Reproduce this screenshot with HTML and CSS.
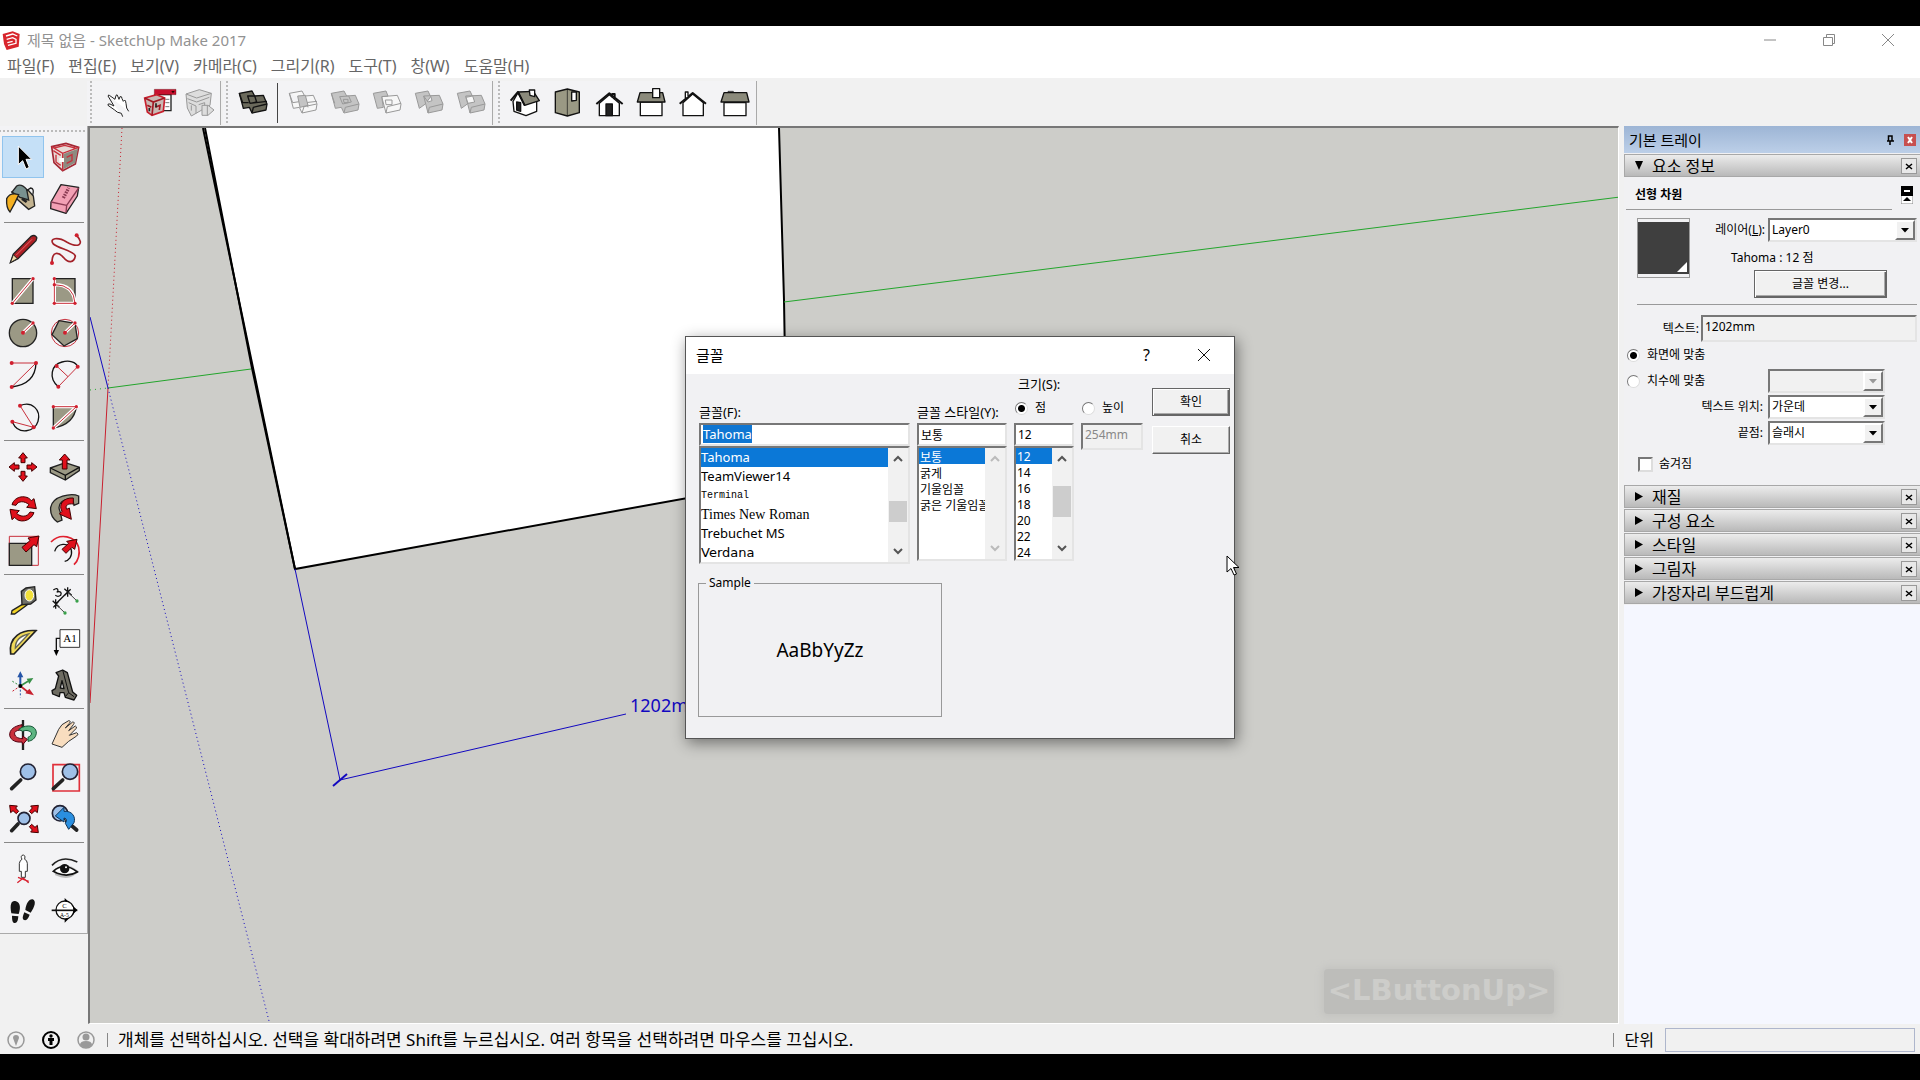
FILE: index.html
```html
<!DOCTYPE html>
<html lang="ko">
<head>
<meta charset="utf-8">
<title>제목 없음 - SketchUp Make 2017</title>
<link rel="stylesheet" href="styles.css">
</head>
<body>
<div class="app">
<header class="titlebar">
  <svg class="logo" viewBox="8 28 60 60"><path d="M10 40 40 32 61 40 58 78 22 88 14 70Z" fill="#d8252c"/><path d="M20 46 40 40 54 46M22 56 40 51 50 56V68L26 74M24 66 40 62" fill="none" stroke="#fff" stroke-width="4"/></svg>
  <h1>제목 없음 - SketchUp Make 2017</h1>
  <div class="winbtns">
    <button aria-label="최소화"><svg viewBox="0 0 14 14"><path d="M1 7H13"/></svg></button>
    <button aria-label="최대화"><svg viewBox="0 0 14 14"><path d="M1.500 4.500H10.500V12.500H1.500ZM4.500 4V1.500H12.500V10.500H11"/></svg></button>
    <button aria-label="닫기"><svg viewBox="0 0 14 14"><path d="M1 1 13 13M13 1 1 13"/></svg></button>
  </div>
</header>
<nav class="menubar">
  <a href="#">파일(F)</a><a href="#">편집(E)</a><a href="#">보기(V)</a><a href="#">카메라(C)</a><a href="#">그리기(R)</a><a href="#">도구(T)</a><a href="#">창(W)</a><a href="#">도움말(H)</a>
</nav>
<div class="toolbar">
  <div class="group">
    <button aria-label="Hand"><svg viewBox="291 186 126 126"><path d="M326 228Q322 224 328 226L345 238 348 226Q352 222 353 228L357 238 360 230Q366 228 366 236L370 244 374 240Q377 242 378 250L380 264 386 274M368 290 364 280Q350 278 344 270L324 256Q322 250 330 252L342 258 324 228" fill="#fff" stroke="#222" stroke-width="3"/></svg></button>
    <button aria-label="Components"><svg viewBox="417 186 126 126"><path d="M465 224H513V272H480Z" fill="#fff" stroke="#222" stroke-width="4"/><path d="M463 208H528V224H463Z" fill="#c8102e" stroke="#400"/><path d="M514 213H524L519 220Z" fill="#300"/><path d="M496 238H508M496 248H508M496 260H508" stroke="#777" stroke-width="3"/><path d="M434 234 470 224 494 234 490 274 456 286 442 276Z" fill="#c9b9b4" stroke="#c8202e" stroke-width="5"/><path d="M434 234 460 246 494 234M460 246 456 286M442 256 454 262M466 262 480 256 478 270" fill="none" stroke="#a01824" stroke-width="5"/><path d="M448 264V274M468 250V262" stroke="#222" stroke-width="5"/></svg></button>
    <button aria-label="Replace"><svg viewBox="543 186 126 126" fill="#ddd" stroke="#999" stroke-width="3"><path d="M558 222 598 209 634 220 630 256 574 288 562 264Z"/><path d="M558 222 590 234 634 220M562 236 590 246 628 232M566 248 588 258V280M574 256V272M596 254 614 248V268"/><path d="M606 256H624L642 270 624 286H606Z"/><path d="M622 256V286"/></svg></button>
  </div>
  <div class="group solids">
    <button aria-label="Outer shell"><svg viewBox="696 186 126 126" stroke="#111" stroke-width="4" fill="#6b6a5c" stroke-linejoin="round"><path d="M718 220 756 213 764 228 790 226 801 252 798 270 756 279 748 262 730 265Z"/><path d="M743 228 764 228 770 246 750 250ZM750 250 801 244M756 279 760 262 801 252M718 220 728 248 746 248"/></svg></button>
    <i class="rule"></i>
    <button aria-label="Intersect"><svg class="dim" viewBox="846 186 126 126"><path class="o" d="M868 220 906 213 914 228 940 226 951 252 948 270 906 279 898 262 880 265ZM868 220 878 248 918 242M900 250 951 244M906 279 912 260 950 252M914 228 924 262"/><path d="M893 228 916 226 924 256 900 262Z"/></svg></button>
    <button aria-label="Union"><svg class="dim" viewBox="972 186 126 126"><path d="M994 220 1032 213 1040 228 1066 226 1077 252 1074 270 1032 279 1024 262 1006 265Z"/><path d="M1019 230 1046 228 1054 246 1028 252ZM1030 238H1044V248H1032ZM1032 279 1036 262 1077 252M994 220 1004 250"/></svg></button>
    <button aria-label="Subtract"><svg class="dim" viewBox="1098 186 126 126"><path class="o" d="M1145 230 1192 226 1203 252 1200 270 1158 279ZM1158 279 1162 260 1203 250M1156 240H1176V254H1158Z"/><path d="M1120 220 1158 213 1164 228 1145 230 1150 262 1132 265Z"/></svg></button>
    <button aria-label="Trim"><svg class="dim" viewBox="1224 186 126 126"><path d="M1246 220 1284 213 1292 230 1276 252 1258 265Z"/><path d="M1271 228 1318 226 1329 252 1326 270 1284 279ZM1284 279 1288 262 1329 252M1271 228 1284 246 1296 242 1292 228"/></svg></button>
    <button aria-label="Split"><svg class="dim" viewBox="1350 186 126 126"><path d="M1372 220 1410 213 1418 230 1402 252 1384 265Z"/><path d="M1397 228 1444 226 1455 252 1452 270 1410 279ZM1410 279 1414 262 1455 252"/><path class="o" d="M1398 232 1418 228 1424 246 1404 250Z" fill="#fff"/></svg></button>
  </div>
  <div class="group views">
    <button aria-label="Iso"><svg viewBox="342 36 126 126" class="house"><path d="M369 94 384 68 404 104 440 92V124L408 137 372 124Z" fill="#fff"/><path d="M384 66 430 64 448 92 404 106Z" fill="#8b8a7b"/><path d="M362 92 384 66 404 106" fill="none" stroke-width="6"/><path d="M418 60H434V80L420 76Z" fill="#fff"/><path d="M380 96 392 98V124L380 120Z" fill="#222"/></svg></button>
    <button aria-label="Top"><svg viewBox="468 36 126 126" class="house"><path d="M496 66 532 57 568 66V128L532 138 496 128Z" fill="#9a9984"/><path d="M532 57V138" stroke-width="2"/><path d="M545 66H559V91L545 93Z" fill="#fff"/></svg></button>
    <button aria-label="Front"><svg viewBox="594 36 126 126" class="house"><path d="M628 100V137H688V100L658 74Z" fill="#fff"/><path d="M667 82V72H674V88M619 102 658 70 698 102" fill="none" stroke-width="6"/><path d="M648 102H667V137H648Z" fill="#222"/></svg></button>
    <button aria-label="Right"><svg viewBox="720 36 126 126" class="house"><path d="M751 96H816V137H751Z" fill="#fff"/><path d="M750 68H818L825 96H742Z" fill="#8b8a7b"/><path d="M788 56H809V83H788Z" fill="#fff"/></svg></button>
    <button aria-label="Back"><svg viewBox="846 36 126 126" class="house"><path d="M879 98V137H940V98L908 72Z" fill="#fff"/><path d="M869 101 908 69 948 101" fill="none" stroke-width="6"/><path d="M886 84V66H894V78" fill="#fff"/></svg></button>
    <button aria-label="Left"><svg viewBox="972 36 126 126" class="house"><path d="M1002 98H1068V137H1002Z" fill="#fff"/><path d="M1014 68V64H1030V68" fill="#888" stroke-width="2"/><path d="M1002 68H1070L1077 96H993Z" fill="#8b8a7b"/></svg></button>
  </div>
</div>

<main class="workspace">
<aside class="tools">
  <div class="set">
    <button class="active" aria-label="Select"><svg viewBox="6 48 126 126"><path d="M55 78V134L68 122 78 147 88 142 78 118H95Z" stroke="#fff" stroke-width="3"/></svg></button>
    <button aria-label="Make component"><svg viewBox="132 48 126 126"><path d="M155 80 198 70 236 82 226 132 188 152 162 128Z" fill="#e8dcd8" stroke="#a32734" stroke-width="5"/><path d="M190 102 234 86 226 128 190 148Z" fill="#8d8b80"/><path d="M155 80 188 100 236 82M188 100V152M162 84 194 76 226 84M168 104V126L182 136M200 112 216 104V122L200 130M160 92 182 106" fill="none" stroke="#c8303c" stroke-width="4"/><path d="M178 114H192V126H178Z" fill="#fff"/></svg></button>
    <button aria-label="Paint bucket"><svg viewBox="6 174 126 126" stroke="#222" stroke-width="4"><path d="M36 216 54 240 86 268 104 258 100 228 84 210Z" fill="#c3b390"/><path d="M50 198Q64 190 80 208L86 240 60 232 36 216Z" fill="#79918f"/><path d="M80 212 92 204Q104 206 98 226" fill="none"/><path d="M20 236Q30 216 56 224L44 250 30 276Q18 264 20 236Z" fill="#f4b020"/><path d="M66 236 80 246" stroke-width="8"/></svg></button>
    <button aria-label="Eraser"><svg viewBox="132 174 126 126" stroke="#222" stroke-width="4" stroke-linejoin="round"><path d="M183 194 236 202 232 228 198 280 152 266 153 246Z" fill="#f2a0b4"/><path d="M153 246 200 256 236 204M200 256 198 278" fill="none" stroke="#8a3a52"/><path d="M190 234 206 204" stroke="#8a3a52" stroke-dasharray="5 3" stroke-width="10"/></svg></button>
  </div>
  <div class="set">
    <button aria-label="Line"><svg viewBox="6 324 126 126"><path d="M31 428 40 402 92 350Q104 342 110 352 112 360 102 368L54 416Z" fill="#ad1f24" stroke="#222" stroke-width="4"/><path d="M31 428 40 404 52 416Z" fill="#f0d9a8" stroke="#222" stroke-width="3"/><path d="M48 406 96 358" stroke="#e8636a" stroke-width="3"/></svg></button>
    <button aria-label="Freehand"><svg viewBox="132 324 126 126"><path d="M230 346C256 376 232 384 200 366 174 350 146 354 160 372 176 386 222 392 226 408 222 430 204 430 190 412 176 396 156 392 156 428" fill="none" stroke="#a32028" stroke-width="5"/><g fill="#d01f2e"><circle cx="230" cy="346" r="6"/><circle cx="156" cy="429" r="6"/></g></svg></button>
    <button aria-label="Rectangle"><svg viewBox="6 450 126 126"><path d="M37 476H99V550H37Z" class="sage"/><path d="M37 550 99 476" class="halo"/><path d="M37 550 99 476" class="red"/><g class="dots"><circle cx="37" cy="550" r="5"/><circle cx="99" cy="476" r="5"/></g></svg></button>
    <button aria-label="Rotated rectangle"><svg viewBox="132 450 126 126"><path d="M163 476H225V550H163Z" class="sage"/><path d="M163 476V550H225Q222 494 163 494" class="halo"/><path d="M163 476V550H225Q222 494 163 494" class="red"/><g class="dots"><circle cx="163" cy="476" r="5"/><circle cx="163" cy="494" r="5"/><circle cx="163" cy="550" r="5"/><circle cx="225" cy="550" r="5"/></g></svg></button>
    <button aria-label="Circle"><svg viewBox="6 576 126 126"><circle cx="69" cy="639" r="41" class="sage"/><path d="M69 638 99 609" class="halo"/><path d="M69 638 99 609" class="red"/><g class="dots"><circle cx="69" cy="638" r="6"/><circle cx="99" cy="609" r="5"/></g></svg></button>
    <button aria-label="Polygon"><svg viewBox="132 576 126 126"><circle cx="195" cy="639" r="41" fill="none" class="red"/><path d="M177 602 225 610 232 656 192 678 156 644Z" class="sage"/><path d="M195 638 225 609" class="halo"/><path d="M195 638 225 609" class="red"/><g class="dots"><circle cx="195" cy="638" r="6"/><circle cx="225" cy="609" r="5"/></g></svg></button>
    <button aria-label="Arc"><svg viewBox="6 702 126 126"><path d="M108 729Q106 792 35 801" class="ink"/><path d="M35 729H108L35 801" class="red"/><g class="dots"><circle cx="35" cy="729" r="6"/><circle cx="108" cy="729" r="6"/><circle cx="35" cy="801" r="6"/></g></svg></button>
    <button aria-label="2 Point Arc"><svg viewBox="132 702 126 126"><path d="M175 800C144 774 154 734 186 726 208 720 228 726 233 740" class="ink"/><path d="M170 738 204 770M175 800 233 740" class="red"/><g class="dots"><circle cx="170" cy="738" r="6"/><circle cx="233" cy="740" r="6"/><circle cx="175" cy="800" r="6"/></g></svg></button>
    <button aria-label="3 Point Arc"><svg viewBox="6 828 126 126"><path d="M60 857C96 842 124 870 114 904 104 936 56 946 38 908" class="ink"/><path d="M60 857 101 922 37 905" class="red"/><g class="dots"><circle cx="60" cy="857" r="6"/><circle cx="37" cy="905" r="6"/><circle cx="101" cy="922" r="6"/></g></svg></button>
    <button aria-label="Pie"><svg viewBox="132 828 126 126"><path d="M160 860H229Q222 914 160 924Z" class="sage"/><path d="M160 924 229 860H160" class="halo"/><path d="M160 924 229 860H160" class="red"/><g class="dots"><circle cx="160" cy="860" r="5"/><circle cx="229" cy="860" r="5"/><circle cx="160" cy="924" r="5"/></g></svg></button>
  </div>
  <div class="set">
    <button aria-label="Move"><svg viewBox="6 48 126 126"><path class="arrow" d="M69 68 82 84H75V98H63V84H56ZM69 154 82 138H75V124H63V138H56ZM27 111 43 98V105H57V117H43V124ZM111 111 95 98V105H81V117H95V124Z"/></svg></button>
    <button aria-label="Push/Pull"><svg viewBox="132 48 126 126"><path d="M151 114 196 98 238 112V122L196 150 151 128Z" class="sage"/><path d="M151 114 196 136 238 112M196 136V150" class="ink"/><path class="arrow" d="M194 72 210 90H201V117H187V90H178Z"/></svg></button>
    <button aria-label="Rotate"><svg viewBox="6 174 126 126"><path class="arrow" d="M36 224C44 196 82 194 94 212L102 206 109 236 80 232 87 224C74 212 54 212 48 226ZM102 248C92 276 56 280 44 262L36 269 30 238 58 242 50 250C62 262 82 262 90 246Z"/></svg></button>
    <button aria-label="Follow me"><svg viewBox="132 174 126 126"><path d="M152 232C158 198 214 188 236 198V220L222 226 218 208C190 204 170 222 180 244L186 270 172 276C158 266 150 252 152 232Z" class="sage"/><path d="M220 204C190 202 174 224 186 244L178 252 214 268 208 234 200 238C194 226 204 220 220 222Z" class="arrow"/></svg></button>
    <button aria-label="Scale"><svg viewBox="6 300 126 126"><path d="M28 319H115V406H28Z" fill="none" class="red"/><path d="M28 340H95V406H28Z" class="sage"/><path class="arrow" d="M117 318 110 350 102 344 78 366 66 352 90 332 84 324Z"/></svg></button>
    <button aria-label="Offset"><svg viewBox="132 300 126 126"><path d="M153 336C180 308 226 318 236 352 240 372 236 390 222 404" fill="none" stroke="#e0202e" stroke-width="5"/><path d="M164 364C172 338 206 336 214 360 218 380 206 392 194 394" class="ink"/><path class="arrow" d="M231 328 224 358 216 352 198 370 186 358 206 340 200 334Z"/></svg></button>
  </div>
  <div class="set">
    <button aria-label="Tape measure"><svg viewBox="6 450 126 126"><path d="M36 542 72 520 80 526 44 552 34 552Z" fill="#f2d325" stroke="#222" stroke-width="4"/><path d="M64 484 78 474 104 470 108 510 92 522 66 524Z" fill="#6f6f68" stroke="#222" stroke-width="4"/><ellipse cx="88" cy="496" rx="13" ry="17" fill="#f2e03a" stroke="#fff" stroke-width="3"/></svg></button>
    <button aria-label="Dimension"><svg viewBox="132 450 126 126"><path d="M167 522 203 486M158 512 178 532M167 508V536M176 514 160 532M193 476 215 496M203 472V500M212 478 194 496M160 480Q174 470 174 484M170 486Q188 482 182 496 174 502 166 496" class="ink"/><path d="M167 522 195 549M203 486 231 513" stroke="#444" stroke-width="3"/><g fill="#39a04a"><circle cx="195" cy="549" r="5"/><circle cx="231" cy="513" r="5"/></g></svg></button>
    <button aria-label="Protractor"><svg viewBox="6 576 126 126"><path d="M108 602C66 598 24 620 32 672L42 672Z" fill="#f0d95a" stroke="#222" stroke-width="5"/><path d="M86 612C60 618 46 632 46 654Z" fill="#fff" stroke="#665" stroke-width="4"/></svg></button>
    <button aria-label="Text"><svg viewBox="132 576 126 126"><path d="M180 599H239V652H180Z" fill="#fff" stroke="#333" stroke-width="3"/><path d="M180 625H169V664" class="ink"/><path d="M161 660H177L169 678Z"/><text x="190" y="635" font-size="33" font-family="Liberation Serif, serif">A1</text></svg></button>
    <button aria-label="Axes"><svg viewBox="6 702 126 126"><path d="M61 768V738" stroke="#2555a8" stroke-width="6"/><path d="M52 742H70L61 724Z" fill="#2555a8"/><path d="M61 768 84 754" stroke="#389048" stroke-width="5"/><path d="M80 746 100 744 88 762Z" fill="#389048"/><path d="M61 768 84 786" stroke="#c8202e" stroke-width="5"/><path d="M76 790 102 796 88 776Z" fill="#c8202e"/><path d="M61 768V802" stroke="#2555a8" stroke-width="3" stroke-dasharray="6 5"/><path d="M61 768 34 752" stroke="#389048" stroke-width="3" stroke-dasharray="6 5"/><path d="M61 768 34 786" stroke="#c8202e" stroke-width="3" stroke-dasharray="6 5"/><circle cx="61" cy="768" r="6"/></svg></button>
    <button aria-label="3D Text"><svg viewBox="132 702 126 126" fill="#6e6c62" stroke="#111" stroke-width="4" stroke-linejoin="round"><path d="M168 728 188 720 202 728 218 786 230 796 222 810 196 802 192 788H180L178 800 158 792 156 782 166 776 176 738ZM186 752 181 774 192 776Z"/><path d="M188 720 206 788 222 800M206 788 196 800" fill="none" stroke-width="3"/></svg></button>
  </div>
  <div class="set">
    <button aria-label="Orbit"><svg viewBox="6 72 126 126"><path d="M69 90V180" stroke="#222" stroke-width="7"/><path d="M66 104C44 108 28 118 29 136 32 152 50 158 66 156L68 164 82 148 68 138V146C52 146 42 138 44 128 46 122 56 120 66 120Z" fill="#c8303c" stroke="#501" stroke-width="3"/><path d="M66 112C96 100 110 116 109 130 106 146 96 152 84 154V142C92 138 96 134 94 128 86 120 76 120 68 124L56 118Z" fill="#5db582" stroke="#153" stroke-width="3"/></svg></button>
    <button aria-label="Pan"><svg viewBox="132 72 126 126"><path d="M156 162 176 118 186 104 206 92Q214 92 208 100L196 114 218 96Q226 96 220 104L206 122 226 108Q232 110 228 116L208 136 230 128Q238 132 230 138L206 154 186 172Z" fill="#f8ddbf" stroke="#333" stroke-width="3"/></svg></button>
    <button aria-label="Zoom"><svg viewBox="6 198 126 126"><path d="M35 296 62 270" class="handle"/><circle cx="84" cy="245" r="23" class="lens"/></svg></button>
    <button aria-label="Zoom window"><svg viewBox="132 198 126 126"><path d="M159 224H238V303H159Z" fill="none" stroke="#e0303a" stroke-width="5"/><path d="M160 296 188 270" class="handle"/><circle cx="210" cy="245" r="23" class="lens"/></svg></button>
    <button aria-label="Zoom extents"><svg viewBox="6 324 126 126"><path d="M35 422 54 402" class="handle"/><circle cx="72" cy="385" r="18" class="lens"/><path class="arrow" d="M29 346 52 348 47 354 56 364 49 371 39 362 32 368ZM115 346 112 368 105 362 95 371 88 364 97 354 92 348ZM115 428 92 426 97 420 88 410 95 403 105 412 112 406Z"/></svg></button>
    <button aria-label="Previous"><svg viewBox="132 324 126 126"><circle cx="180" cy="370" r="23" class="lens"/><path d="M200 394 230 420" class="handle"/><path d="M166 378 192 352V364C216 362 228 380 222 398L206 418 196 400Q204 386 192 384V396Z" fill="#2a8fe0" stroke="#135" stroke-width="3"/></svg></button>
  </div>
  <div class="set">
    <button aria-label="Position camera"><svg viewBox="6 474 126 126"><path d="M58 520Q60 510 66 508 60 496 70 495 78 496 74 508 81 510 82 520V544H76V562H64V544H58Z" fill="#fff" stroke="#333" stroke-width="3"/><path d="M52 578 70 564 86 578M54 562 86 574" fill="none" stroke="#d8202e" stroke-width="4"/></svg></button>
    <button aria-label="Look around"><svg viewBox="132 474 126 126"><path d="M160 540Q196 510 236 544 210 576 166 556Z" fill="#bbb"/><path d="M160 544Q192 514 232 546 204 562 172 550Z" fill="#fff" stroke="#111" stroke-width="5"/><path d="M156 526Q186 494 232 516" fill="none" stroke="#222" stroke-width="5"/><circle cx="194" cy="536" r="14" fill="#111"/><circle cx="198" cy="532" r="3" fill="#fff"/></svg></button>
    <button aria-label="Walk"><svg viewBox="6 600 126 126"><path d="M34 670C28 640 36 630 48 634 62 638 62 656 56 672ZM36 677 55 679C54 694 50 700 44 699 38 698 36 692 36 677ZM76 660C78 640 88 626 98 628 110 632 104 652 92 668ZM73 667 89 674C84 688 78 692 72 690 66 686 68 680 73 667Z" fill="#151515"/></svg></button>
    <button aria-label="Section plane"><svg viewBox="132 600 126 126"><circle cx="195" cy="660" r="27" fill="#fff" stroke="#111" stroke-width="4"/><path d="M155 661H232" stroke="#111" stroke-width="5"/><path d="M194 624 232 660 194 698V688Q216 686 222 661 216 636 194 634Z"/><text x="187" y="655" font-size="20" font-family="Liberation Serif, serif">C</text><text x="180" y="680" font-size="17" font-family="Liberation Serif, serif">A-5</text></svg></button>
  </div>
</aside>

<section class="canvas">
  <svg class="scene" aria-label="모델">
    <path d="M113 0 205 441 697 352 694 172 689 0Z" fill="#fff"/>
    <path d="M113 0 205 441 697 352M689 0 694 172 697 352" fill="none" stroke="#000" stroke-width="2"/>
    <path d="M115 0 162 240 205 441" fill="none" stroke="#000" stroke-width="2"/>
    <path d="M18 260 161 241M694 174 1530 69" stroke="#23a52c"/>
    <path d="M0 262 18 260" stroke="#23a52c" stroke-dasharray="1 4"/>
    <path d="M32 0 18 260" stroke="#c8202e" stroke-dasharray="1 3"/>
    <path d="M18 260 0 575" stroke="#c8202e"/>
    <path d="M0 189 18 260M205 441 250 652 536 586" fill="none" stroke="#1208c0"/>
    <path d="M18 260 179 893" stroke="#1208c0" stroke-dasharray="1 3"/>
    <path d="M243 658 257 646" stroke="#1208c0" stroke-width="2"/>
    <text x="540" y="584" class="dimension">1202mm</text>
  </svg>
  <div class="keycast">&lt;LButtonUp&gt;</div>
</section>

<aside class="tray">
  <header class="trayhead"><h2>기본 트레이</h2>
    <button aria-label="고정"><svg viewBox="0 0 12 12"><path d="M3 7H10M4.500 7V2H8V7M6 7V11" fill="none" stroke="#000" stroke-width="1.500"/></svg></button>
    <button class="close" aria-label="닫기"><svg viewBox="0 0 12 12"><path d="M4 3 8 9M8 3 4 9" stroke="#fff" stroke-width="2"/></svg></button>
  </header>
  <h3 class="section"><i class="tri open"></i>요소 정보<button aria-label="닫기"><svg viewBox="0 0 14 14"><path d="M4 5 10 10M10 5 4 10"/></svg></button></h3>
  <form class="entity">
    <div class="kind"><b>선형 차원</b><button type="button" aria-label="세부 정보"><svg viewBox="0 0 12 18"><path d="M0 0H12V18H0Z" fill="#fff" stroke="#888"/><path d="M0 0H12V10H0Z"/><path d="M3 5H9" stroke="#fff" stroke-width="2"/><path d="M2 15H10L6 11Z"/></svg></button></div>
    <div class="props">
      <div class="swatch"><i></i></div>
      <div class="propcol">
        <div class="row end"><label for="layer">레이어(<u>L</u>):</label><span class="combo wide"><select id="layer"><option>Layer0</option></select><i></i></span></div>
        <div class="fontname">Tahoma : 12 점</div>
        <button type="button" class="btn default change">글꼴 변경...</button>
      </div>
    </div>
    <div class="row textrow"><label for="txt">텍스트:</label><input id="txt" class="field flat" value="1202mm"></div>
    <div class="row opt"><input type="radio" name="al" id="al1" checked><label for="al1">화면에 맞춤</label></div>
    <div class="row opt"><input type="radio" name="al" id="al2"><label for="al2">치수에 맞춤</label><span class="combo off"><select disabled aria-label="치수 맞춤"><option></option></select><i></i></span></div>
    <div class="row pos"><label for="tp">텍스트 위치:</label><span class="combo"><select id="tp"><option>가운데</option></select><i></i></span></div>
    <div class="row pos"><label for="ep">끝점:</label><span class="combo"><select id="ep"><option>슬래시</option></select><i></i></span></div>
    <div class="row hid"><input type="checkbox" id="hd"><label for="hd">숨겨짐</label></div>
  </form>
  <h3 class="section"><i class="tri"></i>재질<button aria-label="닫기"><svg viewBox="0 0 14 14"><path d="M4 5 10 10M10 5 4 10"/></svg></button></h3>
  <h3 class="section"><i class="tri"></i>구성 요소<button aria-label="닫기"><svg viewBox="0 0 14 14"><path d="M4 5 10 10M10 5 4 10"/></svg></button></h3>
  <h3 class="section"><i class="tri"></i>스타일<button aria-label="닫기"><svg viewBox="0 0 14 14"><path d="M4 5 10 10M10 5 4 10"/></svg></button></h3>
  <h3 class="section"><i class="tri"></i>그림자<button aria-label="닫기"><svg viewBox="0 0 14 14"><path d="M4 5 10 10M10 5 4 10"/></svg></button></h3>
  <h3 class="section"><i class="tri"></i>가장자리 부드럽게<button aria-label="닫기"><svg viewBox="0 0 14 14"><path d="M4 5 10 10M10 5 4 10"/></svg></button></h3>
  <div class="trayrest"></div>
</aside>
</main>

<footer class="status">
  <svg viewBox="0 0 18 18"><circle cx="9" cy="9" r="8" fill="none" stroke="#999" stroke-width="1.500"/><path d="M6 7a3 3 0 1 1 6 0L9 15Z" fill="#999"/></svg>
  <svg viewBox="0 0 18 18"><circle cx="9" cy="9" r="8" fill="none" stroke="#000" stroke-width="2"/><circle cx="9" cy="5" r="1.700"/><path d="M6 7H12V10H10.500V14H7.500V10H6Z"/></svg>
  <svg viewBox="0 0 18 18"><circle cx="9" cy="9" r="8" fill="none" stroke="#999" stroke-width="1.500"/><circle cx="9" cy="6" r="3.500" fill="#999"/><path d="M3 14Q3 10 9 10T15 14Q9 20 3 14Z" fill="#999"/></svg>
  <p>개체를 선택하십시오. 선택을 확대하려면 Shift를 누르십시오. 여러 항목을 선택하려면 마우스를 끄십시오.</p>
  <label for="unit">단위</label><input id="unit">
</footer>
</div>

<form class="dialog" role="dialog" aria-labelledby="dt">
  <header><h2 id="dt">글꼴</h2><button type="button" aria-label="도움말">?</button><button type="button" aria-label="닫기"><svg viewBox="0 0 14 14"><path d="M1 1 13 13M13 1 1 13" stroke="#111" fill="none"/></svg></button></header>
  <div class="dbody">
    <div class="pickers">
      <span class="sizelabel">크기(S):</span>
      <label for="ff">글꼴(F):</label>
      <label for="fs">글꼴 스타일(Y):</label>
      <span class="row rad"><input type="radio" name="u" id="u1" checked><label for="u1">점</label></span>
      <span class="row rad"><input type="radio" name="u" id="u2"><label for="u2">높이</label></span>
      <span class="field chosen"><mark>Tahoma</mark></span>
      <input class="field" id="fs" value="보통">
      <input class="field" aria-label="크기" value="12">
      <input class="field tall" aria-label="높이" value="254mm" disabled>
      <div class="list big">
        <select size="6" id="ff"><option selected>Tahoma</option><option>TeamViewer14</option><option class="f-term">Terminal</option><option class="f-times">Times New Roman</option><option>Trebuchet MS</option><option class="f-verd">Verdana</option></select>
        <div class="scroll"><svg viewBox="0 0 12 8"><path d="M2 6 6 2 10 6"/></svg><i class="t1"></i><svg viewBox="0 0 12 8"><path d="M2 2 6 6 10 2"/></svg></div>
      </div>
      <div class="list">
        <select size="6" aria-label="글꼴 스타일"><option selected>보통</option><option>굵게</option><option>기울임꼴</option><option>굵은 기울임꼴</option></select>
        <div class="scroll none"><svg viewBox="0 0 12 8"><path d="M2 6 6 2 10 6"/></svg><svg viewBox="0 0 12 8"><path d="M2 2 6 6 10 2"/></svg></div>
      </div>
      <div class="list nums">
        <select size="7" aria-label="크기 목록"><option selected>12</option><option>14</option><option>16</option><option>18</option><option>20</option><option>22</option><option>24</option></select>
        <div class="scroll"><svg viewBox="0 0 12 8"><path d="M2 6 6 2 10 6"/></svg><i class="t2"></i><svg viewBox="0 0 12 8"><path d="M2 2 6 6 10 2"/></svg></div>
      </div>
    </div>
    <div class="actions"><button type="button" class="btn default">확인</button><button type="button" class="btn">취소</button></div>
  </div>
  <fieldset><legend>Sample</legend>AaBbYyZz</fieldset>
</form>
<svg class="cursor" viewBox="0 0 14 21"><path d="M1 1V17L5 13.500 8 20 10.500 19 7.500 12.500H13Z" fill="#fff" stroke="#000"/></svg>
</body>
</html>
```
FILE: styles.css
```css
* { box-sizing: border-box; }
body { margin: 0; background: #000; color: #000; font: 12px/16px "Noto Sans", "Noto Sans CJK KR", sans-serif; }
button, input, select { font: inherit; color: inherit; margin: 0; padding: 0; border: 0; background: none; border-radius: 0; outline: 0; min-width: 0; }
h1, h2, h3, p { margin: 0; font-weight: 400; }
.app { min-height: 100vh; padding: 26px 0; display: flex; flex-direction: column; overflow: hidden; }
.titlebar { height: 28px; background: #fff; display: flex; align-items: center; padding: 0 3px 0 2px; gap: 5px; color: #929292; }
.titlebar h1 { font-size: 15px; line-height: 24px; flex: 1; }
.logo { width: 20px; height: 20px; }
.winbtns { display: flex; }
.winbtns button { width: 59px; height: 24px; }
.winbtns svg { width: 14px; height: 14px; fill: none; stroke: #888; display: block; margin: auto; }
.menubar { height: 24px; background: #fff; display: flex; gap: 14px; padding-left: 7px; }
.menubar a { color: #666; text-decoration: none; font-size: 16px; line-height: 24px; }
.toolbar { background: #f1f1f1; height: 48px; padding: 3px 0 1px 87px; display: flex; gap: 2px; }
.group { display: flex; align-items: center; padding-left: 10px; border-right: 1px solid #aaa; background: #f3f3f5 radial-gradient(circle, #bbb 1px, transparent 1px) 2px 3px/4px 4px repeat-y; }
.group.solids { padding-left: 9px; }
.group.views { padding-left: 9px; }
.toolbar .group svg, .tools svg { display: block; width: 42px; height: 42px; }
.group:first-child button:last-child { margin-right: -3px; }
.rule { width: 1px; height: 40px; background: #444; margin: 0 4px 0 3px; }
.dim { fill: #c4c4c4; stroke: #999; stroke-width: 3px; stroke-linejoin: round; }
.dim .o { fill: #f7f7f7; }
.house { stroke: #111; stroke-width: 4px; stroke-linejoin: round; }
.workspace { flex: 1; display: flex; background: #f1f1f1; align-items: stretch; }
.tools { flex: 0 0 88px; width: 88px; align-self: flex-start; padding: 10px 1px 0 2px; background: #f3f3f5 radial-gradient(circle, #bbb 1px, transparent 1px) 2px 3px/4px 4px repeat-x; border-right: 1px solid #aaa; border-bottom: 1px solid #aaa; }
.set { display: grid; grid-template-columns: 42px 42px; padding-bottom: 2px; }
.set + .set { background: linear-gradient(#888, #888) 2px 0/80px 1px no-repeat; padding-top: 6px; }
.set:last-child { padding-bottom: 1px; }
.active { background: #c5e0f7; box-shadow: inset 0 0 0 1px #90c4ee; }
.sage { fill: #9b9985; stroke: #222; stroke-width: 4px; }
.halo { fill: none; stroke: #fff; stroke-width: 10px; }
.red { fill: none; stroke: #c8303c; stroke-width: 3px; }
.dots { fill: #d01f2e; }
.ink { fill: none; stroke: #111; stroke-width: 4px; }
.arrow { fill: #e0101c; stroke: #400; stroke-width: 3px; }
.lens { fill: #9fc0e8; stroke: #223; stroke-width: 5px; }
.handle { stroke: #222; stroke-width: 11px; stroke-linecap: round; }
.canvas { flex: 1; min-width: 0; position: relative; background: #cdcdc9; border: 2px solid #777; border-right: 1px solid #fff; border-bottom: 1px solid #fff; overflow: hidden; display: flex; }
.scene { flex: 1; width: 100%; height: auto; }
.dimension { fill: #1208c0; font-size: 18px; }
.keycast { position: absolute; right: 64px; bottom: 9px; width: 230px; height: 45px; background: #bdbdba; border-radius: 4px; box-shadow: 0 0 6px 3px #c4c4c1; color: #cdcdca; font: 700 29px/42px "DejaVu Sans", sans-serif; text-align: center; white-space: nowrap; }
.tray { flex: 0 0 296px; margin-left: 5px; display: flex; flex-direction: column; gap: 1px; background: #f1f1f3; }
.trayhead { height: 27px; background: linear-gradient(#9db5d5, #bccfe8); display: flex; align-items: center; gap: 8px; padding: 0 4px 0 5px; }
.trayhead h2 { flex: 1; font-size: 15px; line-height: 24px; }
.trayhead button { width: 12px; height: 12px; }
.trayhead svg { width: 12px; height: 12px; display: block; }
.trayhead .close { background: #c75050; }
.section { height: 23px; display: flex; align-items: center; gap: 9px; padding: 0 3px 0 10px; font-size: 16px; line-height: 20px; border: 1px solid #a8a8a8; border-right: 0; background: linear-gradient(#ececec, #b9b9b9); }
.section button { margin-left: auto; width: 16px; height: 16px; background: #e8e8e8; border: 1px solid #999; }
.section svg { width: 14px; height: 14px; display: block; stroke: #000; stroke-width: 1.5px; }
.tri { width: 8px; height: 9px; background: #000; clip-path: polygon(0 0, 100% 50%, 0 100%); }
.tri.open { clip-path: polygon(0 0, 100% 0, 50% 100%); }
.entity { height: 306px; display: flex; flex-direction: column; padding: 5px 3px 0 0; }
.row { display: flex; align-items: center; }
.kind { display: flex; justify-content: space-between; align-items: center; padding: 0 4px 4px 11px; height: 27px; background: linear-gradient(#999, #999) 2px 100%/266px 1px no-repeat; }
.kind svg { width: 12px; height: 18px; display: block; }
.props { display: flex; padding: 8px 0 6px; margin-left: 13px; border-bottom: 1px solid #999; justify-content: space-between; }
.swatch { width: 53px; height: 60px; border: 1px solid #999; background: #3f3f3f content-box; padding: 3px 0; display: flex; align-items: flex-end; justify-content: flex-end; }
.swatch i { width: 10px; height: 10px; margin: 2px; background: #fff; clip-path: polygon(100% 0, 100% 100%, 0 100%); }
.propcol { flex: 1; display: flex; flex-direction: column; }
.end { justify-content: flex-end; gap: 3px; }
.combo { display: grid; width: 117px; height: 24px; background: #fff; border: 2px solid; border-color: #777 #e4e4e4 #e4e4e4 #777; }
.combo.wide { width: 149px; }
.combo select { grid-area: 1/1; appearance: none; padding: 0 2px; line-height: 18px; opacity: 1; }
.combo > i { grid-area: 1/1; justify-self: end; width: 20px; pointer-events: none; background: #f1f1f1; border: 2px solid; border-color: #fff #777 #777 #fff; display: grid; place-items: center; }
.combo > i::before { content: ""; width: 9px; height: 5px; background: #000; clip-path: polygon(0 0, 100% 0, 50% 100%); }
.combo.off { background: #f1f1f1; margin-left: auto; margin-right: 32px; }
.combo.off > i::before { background: #999; }
.fontname { padding: 8px 0 4px 41px; }
.btn { background: #f1f1f1; border: 1px solid; border-color: #fff #666 #666 #fff; box-shadow: inset -1px -1px #aaa; height: 28px; line-height: 24px; }
.btn.default { border: 1px solid #666; box-shadow: inset 1px 1px #fff, inset -1px -1px #666, inset -2px -2px #aaa; }
.change { width: 133px; margin-left: 64px; }
.field { background: #fff; border: 2px solid; border-color: #777 #e4e4e4 #e4e4e4 #777; height: 23px; padding: 0 2px; width: 100%; line-height: 18px; }
.textrow { padding-top: 10px; gap: 2px; justify-content: flex-end; }
.field.flat { background: #f1f1f1; width: 216px; height: 27px; padding-bottom: 4px; }
input[type="radio"], input[type="checkbox"] { appearance: none; width: 13px; height: 13px; background: #fff; border: 2px solid; border-color: #777 #ddd #ddd #777; flex: none; }
input[type="radio"] { border-radius: 50%; border-width: 1px; }
input[type="radio"]:checked { background: radial-gradient(circle, #000 0 3px, #fff 4px); }
.opt { height: 26px; padding-left: 3px; gap: 7px; }
.pos { height: 26px; justify-content: flex-end; gap: 5px; padding-right: 32px; }
.hid { height: 36px; padding-left: 14px; gap: 6px; }
.hid input[type="checkbox"] { width: 15px; height: 15px; }
.trayrest { flex: 1; background: #f5f7ff; }
.status { height: 30px; background: #f1f1f1; display: flex; align-items: center; padding: 2px 5px 0 7px; font-size: 16px; line-height: 24px; }
.status svg { width: 18px; height: 18px; margin-right: 17px; flex: none; }
.status p { flex: 1; padding-left: 10px; margin-left: -5px; border-left: 1px solid #888; font-size: 17px; line-height: 14px; }
.status label { border-left: 1px solid #888; padding-left: 11px; line-height: 14px; }
.status input { width: 250px; height: 24px; margin-left: 11px; border: 1px solid #aeb6cc; }
.dialog { position: absolute; left: 685px; top: 336px; width: 550px; height: 403px; background: #f1f1f3; border: 1px solid #555; box-shadow: 2px 4px 14px rgba(0, 0, 0, .45); }
.dialog header { height: 37px; background: #fff; display: flex; align-items: center; padding: 0 0 2px 10px; }
.dialog header h2 { flex: 1; font-size: 15px; line-height: 24px; }
.dialog header button { width: 57px; font-size: 16px; }
.dialog header button + button { margin-right: 2px; }
.dialog header svg { width: 14px; height: 14px; display: block; margin: auto; }
.dbody { display: flex; padding: 2px 4px 0 13px; gap: 9px; }
.pickers { display: grid; grid-template-columns: 211px 90px 60px 62px; grid-template-rows: 18px 29px 23px auto; column-gap: 7px; align-items: start; }
.pickers > label { font-size: 13px; align-self: end; line-height: 22px; white-space: nowrap; }
.sizelabel { grid-column: 3 / 5; font-size: 13px; padding-left: 4px; }
.pickers > label[for="ff"] { grid-column: 1; }
.rad { gap: 7px; height: 28px; padding-left: 1px; }
.chosen { font-size: 13px; }
.chosen mark { background: #0f76d2; color: #fff; }
.tall { height: 27px; color: #888; background: #f1f1f1; padding-bottom: 4px; }
.list { display: flex; background: #fff; border: 2px solid; border-color: #777 #e4e4e4 #e4e4e4 #777; height: 115px; }
.list.big { height: 118px; }
.list select { flex: 1; appearance: none; overflow: hidden; scrollbar-width: none; background: #fff; }
.list option { padding: 0 0 0 1px; height: 16px; min-height: 0; line-height: 16px; }
.big option { height: 19px; line-height: 19px; font-size: 13px; padding-left: 0; }
.list option:checked { background: #0b78d7 linear-gradient(#0b78d7, #0b78d7); color: #fff; -webkit-text-fill-color: #fff; }
.list .f-term { font: 10px/19px "Liberation Mono", monospace; padding-top: 4px; }
.list .f-times { font: 14px/19px "Liberation Serif", serif; padding-top: 2px; }
.list .f-verd { font-family: "DejaVu Sans", sans-serif; padding-top: 2px; }
.scroll { flex: 0 0 20px; background: #f1f1f1; display: flex; flex-direction: column; align-items: center; justify-content: space-between; padding: 7px 0; }
.scroll svg { width: 12px; height: 8px; fill: none; stroke: #555; stroke-width: 2px; }
.scroll.none svg { stroke: #bbb; }
.scroll i { width: 18px; background: #cdcdcd; }
.t1 { height: 21px; margin-top: 12px; }
.t2 { height: 31px; margin-bottom: 4px; }
.actions { flex: 1; display: flex; flex-direction: column; gap: 10px; padding-top: 12px; }
.dialog fieldset { width: 244px; height: 142px; margin: 11px 0 0 12px; padding: 0 0 8px; border: 1px solid #999; display: grid; place-items: center; font-size: 19px; line-height: 24px; }
.dialog legend { font-size: 12px; line-height: 16px; margin-left: 7px; padding: 0 3px; }
.cursor { position: absolute; left: 1226px; top: 555px; width: 14px; height: 21px; }
```
